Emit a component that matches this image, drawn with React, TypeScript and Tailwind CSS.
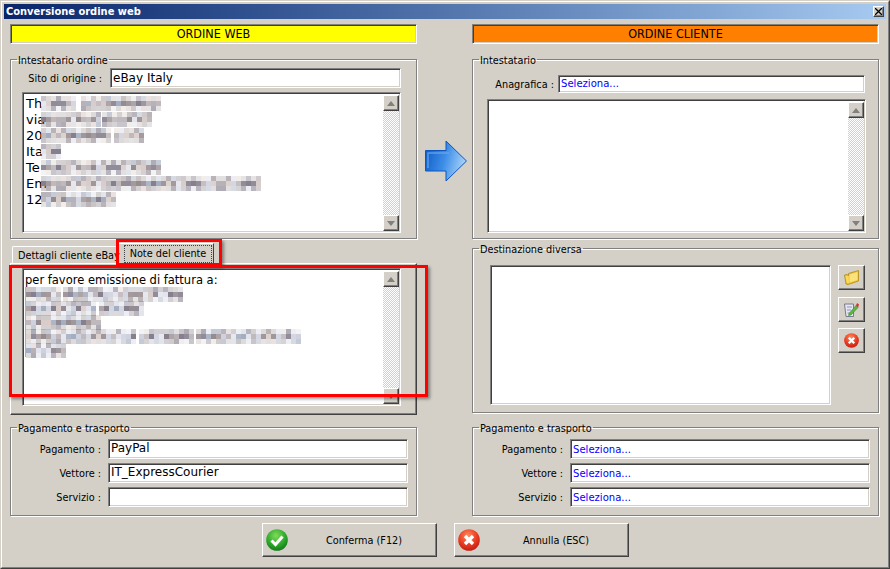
const sunken =
  'border border-t-[#808080] border-l-[#808080] border-r-white border-b-white shadow-[inset_1px_1px_0_#404040,inset_-1px_-1px_0_#d4d0c8] bg-white'
const raised =
  'border border-t-white border-l-white border-r-[#404040] border-b-[#404040] shadow-[inset_-1px_-1px_0_#808080] bg-[#d4d0c8]'
const mono = "font-['DejaVu_Sans',sans-serif] text-[12px]"

const palette = ['#b4aeb2', '#948c90', '#ccd0dc', '#86808e', '#d8cac6', '#a4aec0', '#7e7888', '#bfb8bc', '#a09496', '#e4e4ec']

const Mosaic = ({ parts, seed, rows = 3, top = 0 }: { parts: number[]; seed: number; rows?: number; top?: number }) => {
  const cell = 5
  const width = parts.reduce((sum, p) => sum + p + cell, 0)
  const rects = []
  let x = 0
  parts.forEach((part, p) => {
    for (let col = 0; col < Math.ceil(part / cell); col++) {
      for (let row = 0; row < rows; row++) {
        const n = (seed * 31 + (x + col * cell) * 17 + row * 13 + col * col * 7) % 97
        const edge = row === 0 || row === rows - 1
        rects.push(
          <rect
            key={`${p}-${col}-${row}`}
            x={x + col * cell}
            y={top + row * cell}
            width={cell}
            height={cell}
            fill={palette[n % palette.length]}
            opacity={edge ? 0.35 + (n % 4) * 0.1 : 0.85 + (n % 4) * 0.05}
          />,
        )
      }
    }
    x += part + cell
  })
  return (
    <svg width={width} height={16} className="block shrink-0">
      {rects}
    </svg>
  )
}

const ScrollArrow = ({ down }: { down?: boolean }) => (
  <div className={`${raised} flex h-[16px] w-[16px] items-center justify-center`}>
    <svg width="8" height="5" viewBox="0 0 8 5">
      <path d={down ? 'M0 0H8L4 5Z' : 'M4 0L8 5H0Z'} fill="#808080" />
    </svg>
  </div>
)

const Scrollbar = () => (
  <div className="flex h-full w-[16px] shrink-0 flex-col justify-between bg-[repeating-conic-gradient(#d4d0c8_0_25%,#fff_0_50%)] bg-[length:2px_2px]">
    <ScrollArrow />
    <ScrollArrow down />
  </div>
)

const Group = ({ title, className, children }: { title: string; className: string; children: React.ReactNode }) => (
  <fieldset className={`border border-[#808080] shadow-[1px_1px_0_#fff,inset_1px_1px_0_#fff] ${className}`}>
    <legend className="ml-[6px] h-[13px] px-[1px] text-[10.8px] leading-[15px] text-black">{title}</legend>
    {children}
  </fieldset>
)

const PayRow = ({ label, value, blue }: { label: string; value: string; blue?: boolean }) => (
  <div className="flex items-center gap-[7px]">
    <span className="w-[90px] pt-[2px] text-right text-[10.8px] text-black">{label} :</span>
    <div
      className={`${sunken} h-[20px] w-[300px] pl-[2px] ${
        blue ? 'pt-[2px] text-[11.2px] leading-[16px] text-[#0000ff]' : `${mono} leading-[17px] text-black`
      }`}
    >
      {value}
    </div>
  </div>
)

const PayGroup = ({ rows, blue }: { rows: [string, string][]; blue?: boolean }) => (
  <Group title="Pagamento e trasporto" className="mt-[6px] h-[95px] w-[407px]">
    <div className="flex flex-col gap-[4px] pt-[5px]">
      {rows.map(([label, value]) => (
        <PayRow key={label} label={label} value={value} blue={blue} />
      ))}
    </div>
  </Group>
)

const CheckIcon = () => (
  <svg width="22" height="22" viewBox="0 0 22 22" className="shrink-0">
    <defs>
      <radialGradient id="okBall" cx="0.45" cy="0.3" r="0.8">
        <stop offset="0" stopColor="#7fdc5a" />
        <stop offset="0.55" stopColor="#2ea82a" />
        <stop offset="1" stopColor="#0c6a18" />
      </radialGradient>
    </defs>
    <circle cx="11" cy="11" r="10.8" fill="url(#okBall)" />
    <path d="M5.5 11.5L9.5 15.5L16.5 7.5" fill="none" stroke="#fff" strokeWidth="3" />
  </svg>
)

const CrossIcon = ({ size = 22, id }: { size?: number; id: string }) => (
  <svg width={size} height={size} viewBox="0 0 22 22" className="shrink-0">
    <defs>
      <radialGradient id={id} cx="0.45" cy="0.3" r="0.8">
        <stop offset="0" stopColor="#ff8a60" />
        <stop offset="0.55" stopColor="#e83a20" />
        <stop offset="1" stopColor="#b01410" />
      </radialGradient>
    </defs>
    <circle cx="11" cy="11" r="10.8" fill={`url(#${id})`} />
    <path d="M7 7L15 15M15 7L7 15" fill="none" stroke="#fff" strokeWidth="3.4" />
  </svg>
)

const FolderIcon = () => (
  <svg width="15" height="15" viewBox="0 0 15 15">
    <path d="M0.5 5L3 4.5L4.5 5.5L4.5 3.5L14.5 0.5V11L4 14.5L2 14Z" fill="#f0c030" stroke="#b08a10" strokeWidth="0.8" />
    <path d="M5.5 4.5L13.5 2V10L5.5 12.5Z" fill="#fbe27a" />
    <path d="M1.5 6L4.5 6L5 13L2.8 13Z" fill="#f8d860" />
  </svg>
)

const NoteIcon = () => (
  <svg width="15" height="15" viewBox="0 0 15 15">
    <path d="M0.5 2H9.5V14.5H2Z" fill="#e6e6f0" stroke="#6c7088" strokeWidth="0.9" />
    <path d="M3 5H8M3 8H7M3.5 11H6" stroke="#9096b4" strokeWidth="1" />
    <path d="M5 11.5L12 3.5L14 5.5L7 13L4.5 13.5Z" fill="#5cb840" stroke="#2c7a20" strokeWidth="0.5" />
    <path d="M12 3.5L13 1L15 2.5L14 5.5Z" fill="#d83030" />
  </svg>
)

const ArrowIcon = () => (
  <svg width="42" height="42" viewBox="0 0 42 42" className="ml-[8px]">
    <defs>
      <linearGradient id="arrowFill" x1="0" y1="0" x2="1" y2="0.25">
        <stop offset="0" stopColor="#0a58c4" />
        <stop offset="0.55" stopColor="#3e8ee8" />
        <stop offset="1" stopColor="#a0cdf6" />
      </linearGradient>
    </defs>
    <path d="M0.5 10.5H21V1L41.5 21L21 41V31H0.5Z" fill="url(#arrowFill)" stroke="#0c56c0" />
    <path d="M3 28V13H24" fill="none" stroke="#6aa6ec" strokeWidth="1.5" opacity="0.8" />
  </svg>
)

const SmallButton = ({ children, className = '' }: { children: React.ReactNode; className?: string }) => (
  <div className={`${raised} flex h-[25px] w-[27px] items-center justify-center ${className}`}>{children}</div>
)

const BigButton = ({ icon, label }: { icon: React.ReactNode; label: string }) => (
  <div className={`${raised} flex h-[34px] w-[175px] items-center pl-[3px]`}>
    {icon}
    <span className="flex-1 pl-[4px] pt-[2px] text-center text-[10.8px] text-black">{label}</span>
  </div>
)

const customerRows = [
  { text: 'Th', parts: [35, 80], seed: 3 },
  { text: 'via', parts: [56, 50], seed: 11 },
  { text: '20', parts: [68, 26], seed: 19 },
  { text: 'Ita', parts: [16], seed: 29 },
  { text: 'Te', parts: [118], seed: 37 },
  { text: 'Em', parts: [218], seed: 41 },
  { text: '12', parts: [72], seed: 53 },
]

const noteRows = [
  { parts: [32, 116], seed: 5 },
  { parts: [68, 42], seed: 13 },
  { parts: [74], seed: 23 },
  { parts: [108, 52, 102], seed: 31 },
  { parts: [40], seed: 47 },
]

export default function App() {
  return (
    <div className="relative h-[569px] w-[890px] overflow-hidden border border-t-[#d4d0c8] border-l-[#d4d0c8] border-r-[#404040] border-b-[#404040] bg-[#d4d0c8] font-['DejaVu_Sans_Condensed','Liberation_Sans',sans-serif]">
      <div className="h-full w-full border border-t-white border-l-white border-r-[#808080] border-b-[#808080] p-[2px]">
        <div className="flex h-[15px] items-center justify-between bg-gradient-to-r from-[#0a246a] to-[#a6caf0] pl-[2px] pr-[2px]">
          <span className="text-[11px] font-bold leading-[15px] text-white">Conversione ordine web</span>
          <div className={`${raised} flex h-[11px] w-[11px] items-center justify-center`}>
            <svg width="7" height="7" viewBox="0 0 7 7">
              <path d="M0 0L7 7M7 0L0 7" stroke="#000" strokeWidth="1.3" />
            </svg>
          </div>
        </div>

        <div className="flex pl-[6px] pt-[5px]">
          <div className="flex w-[407px] flex-col">
            <div className={`${sunken} flex h-[20px] items-center justify-center !bg-[#ffff00] pt-[1px] text-[12.5px] text-black`}>ORDINE WEB</div>

            <Group title="Intestatario ordine" className="mt-[9px] h-[186px]">
              <div className="pl-[11px] pt-[2px]">
                <div className="flex items-center gap-[8px]">
                  <span className="w-[80px] pt-[3px] text-right text-[10.8px] text-black">Sito di origine :</span>
                  <div className={`${sunken} ${mono} h-[20px] w-[291px] pl-[2px] leading-[18px] text-black`}>eBay Italy</div>
                </div>
                <div className={`${sunken} mt-[4px] flex h-[141px] w-[379px] justify-between pb-[1px] pl-[2px] pr-[1px] pt-[2px]`}>
                  <div className="pl-[1px] pt-[1px] font-['DejaVu_Sans',sans-serif] text-[13px] leading-[16px] text-black">
                    {customerRows.map((row) => (
                      <div key={row.seed} className="flex h-[16px]">
                        <span className="w-[15px] overflow-visible whitespace-nowrap">{row.text}</span>
                        <Mosaic parts={row.parts} seed={row.seed} />
                      </div>
                    ))}
                  </div>
                  <Scrollbar />
                </div>
              </div>
            </Group>

            <div className="mt-[4px] flex h-[20px] items-end pl-[2px]">
              <div className="flex h-[17px] w-[104px] items-center whitespace-nowrap rounded-tl-[2px] border-l border-t border-white pl-[5px] pt-[2px] text-[10.8px] text-black">Dettagli cliente eBay</div>
              <div className="flex h-[20px] w-[98px] items-center justify-end border-r border-t border-r-[#404040] border-t-white pr-[1px]">
                <div className="flex h-[18px] w-[88px] items-center justify-center border border-dotted border-[#404040] pt-[2px] text-[10.8px] text-black">Note del cliente</div>
              </div>
            </div>
            <div className={`${raised} h-[152px] pl-[11px] pt-[4px]`}>
              <div className={`${sunken} flex h-[138px] w-[379px] justify-between pb-[1px] pl-[2px] pr-[1px] pt-[2px]`}>
                <div className="pt-[2px] font-['DejaVu_Sans',sans-serif] text-[11.5px] leading-[14px] text-black">
                  <div className="whitespace-nowrap">per favore emissione di fattura a:</div>
                  <div className="border-l border-[#b0b0b0]">
                    {noteRows.map((row) => (
                      <div key={row.seed} className="h-[14px]">
                        <Mosaic parts={row.parts} seed={row.seed} />
                      </div>
                    ))}
                  </div>
                </div>
                <Scrollbar />
              </div>
            </div>

            <PayGroup rows={[['Pagamento', 'PayPal'], ['Vettore', 'IT_ExpressCourier'], ['Servizio', '']]} />
          </div>

          <div className="w-[55px] pt-[116px]">
            <ArrowIcon />
          </div>

          <div className="flex w-[407px] flex-col">
            <div className={`${sunken} flex h-[20px] items-center justify-center !bg-[#ff8000] pt-[1px] text-[12.5px] text-black`}>ORDINE CLIENTE</div>

            <Group title="Intestatario" className="mt-[9px] h-[186px]">
              <div className="pl-[14px] pt-[8px]">
                <div className="flex items-center gap-[4px] pl-0">
                  <span className="-ml-[14px] w-[81px] pt-[3px] text-right text-[10.8px] text-black">Anagrafica :</span>
                  <div className={`${sunken} h-[18px] w-[307px] pl-[2px] text-[11.2px] leading-[15px] text-[#0000ff]`}>Seleziona...</div>
                </div>
                <div className={`${sunken} mt-[6px] flex h-[134px] w-[379px] justify-end pb-[1px] pr-[1px] pt-[2px]`}>
                  <Scrollbar />
                </div>
              </div>
            </Group>

            <Group title="Destinazione diversa" className="mt-[3px] h-[171px]">
              <div className="flex gap-[7px] pl-[17px] pt-[10px]">
                <div className={`${sunken} h-[140px] w-[341px]`} />
                <div className="flex flex-col">
                  <SmallButton>
                    <FolderIcon />
                  </SmallButton>
                  <SmallButton className="mt-[7px]">
                    <NoteIcon />
                  </SmallButton>
                  <SmallButton className="mt-[6px]">
                    <CrossIcon size={15} id="smallCross" />
                  </SmallButton>
                </div>
              </div>
            </Group>

            <div className="pt-[2px]">
              <PayGroup rows={[['Pagamento', 'Seleziona...'], ['Vettore', 'Seleziona...'], ['Servizio', 'Seleziona...']]} blue />
            </div>
          </div>
        </div>

        <div className="flex gap-[17px] pl-[258px] pt-[7px]">
          <BigButton icon={<CheckIcon />} label="Conferma (F12)" />
          <BigButton icon={<CrossIcon id="bigCross" />} label="Annulla (ESC)" />
        </div>
      </div>

      <div className="absolute left-[115px] top-[238px] h-[27px] w-[106px] border-[3px] border-[#ff0000] shadow-[2px_2px_3px_rgba(0,0,0,0.4)]" />
      <div className="absolute left-[8px] top-[264px] h-[132px] w-[419px] border-[3px] border-[#ff0000] shadow-[2px_2px_3px_rgba(0,0,0,0.4)]" />
    </div>
  )
}
